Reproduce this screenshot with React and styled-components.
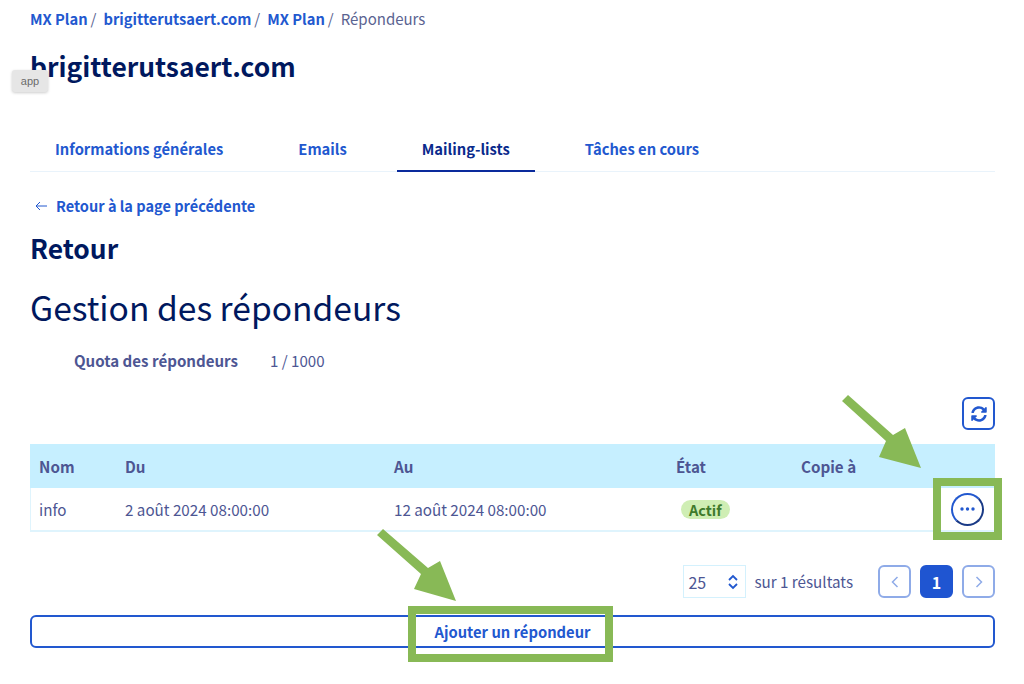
import styled, { createGlobalStyle } from "styled-components";
import { FaSyncAlt } from "react-icons/fa";

const GlobalStyle = createGlobalStyle`
    html, body {
        margin: 0;
        padding: 0;
        background: #fff;
    }
    body {
        font-family: "Noto Sans CJK SC", "Noto Sans", sans-serif;
        color: #4d5693;
    }
`;

const Page = styled.div`
    position: relative;
    width: 1024px;
    height: 684px;
    overflow: hidden;
    box-sizing: border-box;
    padding: 9px 29px 0 30px;
`;

const Breadcrumb = styled.nav`
    display: flex;
    align-items: center;
    height: 20px;
    font-size: 15px;
    line-height: 20px;
`;

const Crumb = styled.a`
    color: ${(p) => (p.$current ? "#5a6391" : "#2258cf")};
    font-size: ${(p) => (p.$current ? "15px" : "14.7px")};
    font-weight: ${(p) => (p.$current ? 400 : 600)};
`;

const Slash = styled.span`
    color: #5a6391;
    margin: 0 7px 0 3px;
`;

const DomainTitle = styled.h1`
    margin: 17px 0 0;
    height: 40px;
    font-size: 26.4px;
    line-height: 40px;
    font-weight: 700;
    color: #00185e;
`;

const Tooltip = styled.div`
    position: absolute;
    left: 12px;
    top: 70px;
    width: 36px;
    height: 22px;
    border-radius: 3px;
    background: #e6e6e6;
    box-shadow: 0 1px 3px rgba(0, 0, 0, 0.2);
    color: #6b6b6b;
    font-family: "Liberation Sans", sans-serif;
    font-size: 11px;
    line-height: 22px;
    text-align: center;
`;

const Tabs = styled.div`
    display: flex;
    margin-top: 40px;
    height: 45px;
    border-bottom: 1px solid #e9f3fb;
`;

const Tab = styled.a`
    box-sizing: border-box;
    height: 46px;
    padding: 0 25px;
    margin-right: 25px;
    font-size: 14.75px;
    font-weight: 600;
    line-height: 46px;
    color: ${(p) => (p.$active ? "#0a2a8c" : "#2258cf")};
    border-bottom: 2px solid ${(p) => (p.$active ? "#0a2a9c" : "transparent")};
`;

const BackLink = styled.a`
    display: flex;
    align-items: center;
    gap: 9px;
    margin: 23px 0 0 5px;
    height: 22px;
    font-size: 14.55px;
    font-weight: 600;
    line-height: 22px;
    color: #2258cf;
`;

const BackTitle = styled.h2`
    margin: 12px 0 0;
    height: 38px;
    font-size: 26.4px;
    line-height: 38px;
    font-weight: 700;
    color: #00185e;
`;

const PageTitle = styled.h3`
    margin: 16px 0 0;
    height: 48px;
    font-size: 33.6px;
    line-height: 48px;
    font-weight: 400;
    color: #00185e;
`;

const Quota = styled.div`
    display: flex;
    margin: 18px 0 0 44px;
    height: 22px;
    font-size: 15.1px;
    line-height: 22px;
`;

const QuotaLabel = styled.span`
    width: 196px;
    font-weight: 700;
`;

const Toolbar = styled.div`
    display: flex;
    justify-content: flex-end;
    margin-top: 26px;
`;

const IconButton = styled.button`
    display: flex;
    align-items: center;
    justify-content: center;
    width: 33px;
    height: 33px;
    padding: 0;
    background: #fff;
    border: 2px solid #2258cf;
    border-radius: 6px;
    color: #2258cf;
`;

const Table = styled.div`
    margin-top: 14px;
    border-bottom: 2px solid #dff4fd;
`;

const Row = styled.div`
    display: grid;
    grid-template-columns: 95px 269px 282px 125px 1fr 50px;
    align-items: center;
    height: ${(p) => (p.$head ? "44px" : "42px")};
    background: ${(p) => (p.$head ? "#c6efff" : "#fff")};
    box-shadow: ${(p) => (p.$head ? "none" : "inset 1px 0 #dff4fd, inset -1px 0 #dff4fd")};
    font-size: 15.2px;
    font-weight: ${(p) => (p.$head ? 700 : 400)};
`;

const Cell = styled.div`
    padding-left: ${(p) => (p.$first ? "9px" : "0")};
    white-space: nowrap;
`;

const ActionCell = styled.div`
    display: flex;
    justify-content: flex-end;
    padding-right: 11px;
`;

const Badge = styled.span`
    display: inline-block;
    margin-left: 5px;
    padding: 0 8px;
    height: 19px;
    border-radius: 10px;
    background: #cfeeb4;
    color: #3f7a2c;
    font-size: 14.5px;
    font-weight: 600;
    line-height: 19px;
`;

const RoundButton = styled.button`
    display: flex;
    align-items: center;
    justify-content: center;
    flex: none;
    width: 33px;
    height: 33px;
    padding: 0;
    background: #fff;
    border: 2px solid #2258cf;
    border-right-color: #1a3a86;
    border-bottom-color: #1a3a86;
    border-radius: 50%;
`;

const Footer = styled.div`
    display: flex;
    align-items: center;
    justify-content: flex-end;
    margin-top: 33px;
    height: 33px;
`;

const PerPage = styled.div`
    box-sizing: border-box;
    display: flex;
    align-items: center;
    justify-content: space-between;
    width: 63px;
    height: 33px;
    padding: 0 6px 0 4px;
    border: 1px solid #d4f1fd;
    font-size: 16px;
`;

const Results = styled.span`
    margin: 0 25px 0 8px;
    padding-bottom: 2px;
    font-size: 15.2px;
`;

const PageButton = styled.button`
    box-sizing: border-box;
    display: flex;
    align-items: center;
    justify-content: center;
    width: 33px;
    height: 33px;
    margin-left: ${(p) => (p.$first ? "0" : "9px")};
    padding: 0;
    font-family: inherit;
    font-size: 16px;
    font-weight: 700;
    color: ${(p) => (p.$active ? "#fff" : "#8fabe8")};
    background: ${(p) => (p.$active ? "#1f55d1" : "#fff")};
    border: 2px solid ${(p) => (p.$active ? "#1f55d1" : "#8fabe8")};
    border-radius: 6px;
`;

const AddButton = styled.button`
    box-sizing: border-box;
    display: block;
    width: 100%;
    height: 33px;
    margin-top: 17px;
    padding: 0;
    background: #fff;
    border: 2px solid #2258cf;
    border-radius: 6px;
    font-family: inherit;
    font-size: 14.75px;
    font-weight: 600;
    color: #2258cf;
`;

const Highlight = styled.div`
    position: absolute;
    box-sizing: border-box;
    left: ${(p) => p.$x}px;
    top: ${(p) => p.$y}px;
    width: ${(p) => p.$w}px;
    height: ${(p) => p.$h}px;
    border: 8px solid #88b956;
`;

const Annotations = styled.svg`
    position: absolute;
    left: 0;
    top: 0;
    pointer-events: none;
`;

const Arrow = ({ points }) => <polygon points={points} fill="#88b956" />;

const DotsIcon = () => (
    <svg width="15" height="4" viewBox="0 0 15 4" fill="#2258cf">
        <circle cx="2" cy="2" r="1.700" />
        <circle cx="7.500" cy="2" r="1.700" />
        <circle cx="13" cy="2" r="1.700" />
    </svg>
);

const BackArrow = () => (
    <svg width="12" height="10" viewBox="0 0 12 10" fill="none" stroke="#2258cf" strokeWidth="1">
        <path d="M12 5H1M5 1 1 5l4 4" />
    </svg>
);

const UpDown = () => (
    <svg width="12" height="16" viewBox="0 0 12 16" fill="none" stroke="#2258cf" strokeWidth="1.800">
        <path d="M2 6l4-4 4 4M2 10l4 4 4-4" />
    </svg>
);

const Chevron = ({ dir }) => (
    <svg width="8" height="12" viewBox="0 0 8 12" fill="none" stroke="#8fabe8" strokeWidth="1.500">
        <path d={dir === "left" ? "M6.500 1 1.500 6l5 5" : "M1.500 1l5 5-5 5"} />
    </svg>
);

const App = () => {
    return (
        <Page>
            <GlobalStyle />
            <Breadcrumb>
                <Crumb>MX Plan</Crumb>
                <Slash>/</Slash>
                <Crumb>brigitterutsaert.com</Crumb>
                <Slash>/</Slash>
                <Crumb>MX Plan</Crumb>
                <Slash>/</Slash>
                <Crumb $current>Répondeurs</Crumb>
            </Breadcrumb>
            <DomainTitle>brigitterutsaert.com</DomainTitle>
            <Tooltip>app</Tooltip>
            <Tabs>
                <Tab>Informations générales</Tab>
                <Tab>Emails</Tab>
                <Tab $active>Mailing-lists</Tab>
                <Tab>Tâches en cours</Tab>
            </Tabs>
            <BackLink>
                <BackArrow />
                Retour à la page précédente
            </BackLink>
            <BackTitle>Retour</BackTitle>
            <PageTitle>Gestion des répondeurs</PageTitle>
            <Quota>
                <QuotaLabel>Quota des répondeurs</QuotaLabel>
                <span>1 / 1000</span>
            </Quota>
            <Toolbar>
                <IconButton>
                    <FaSyncAlt size={16} />
                </IconButton>
            </Toolbar>
            <Table>
                <Row $head>
                    <Cell $first>Nom</Cell>
                    <Cell>Du</Cell>
                    <Cell>Au</Cell>
                    <Cell>État</Cell>
                    <Cell>Copie à</Cell>
                    <Cell />
                </Row>
                <Row>
                    <Cell $first>info</Cell>
                    <Cell>2 août 2024 08:00:00</Cell>
                    <Cell>12 août 2024 08:00:00</Cell>
                    <Cell>
                        <Badge>Actif</Badge>
                    </Cell>
                    <Cell />
                    <ActionCell>
                        <RoundButton>
                            <DotsIcon />
                        </RoundButton>
                    </ActionCell>
                </Row>
            </Table>
            <Footer>
                <PerPage>
                    25
                    <UpDown />
                </PerPage>
                <Results>sur 1 résultats</Results>
                <PageButton $first>
                    <Chevron dir="left" />
                </PageButton>
                <PageButton $active>1</PageButton>
                <PageButton>
                    <Chevron dir="right" />
                </PageButton>
            </Footer>
            <AddButton>Ajouter un répondeur</AddButton>
            <Highlight $x={933} $y={478} $w={69} $h={62} />
            <Highlight $x={408} $y={606} $w={205} $h={56} />
            <Annotations width="1024" height="684">
                <Arrow points="848,395 842,401 886,441 879,457 921,468 905,428 893,435" />
                <Arrow points="383,529 377,535 421,574 414,589 456,601 440,561 428,568" />
            </Annotations>
        </Page>
    );
};

export default App;
